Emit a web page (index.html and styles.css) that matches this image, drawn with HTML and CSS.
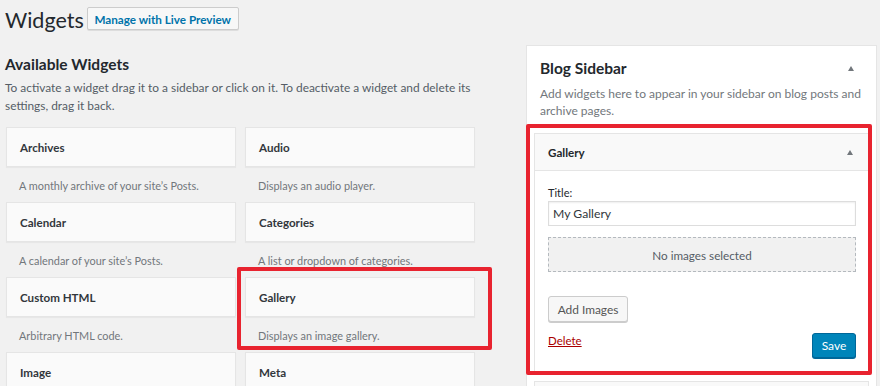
FILE: index.html
```html
<!DOCTYPE html>
<html>
<head>
<meta charset="utf-8">
<link rel="stylesheet" href="styles.css">
</head>
<body>
<div class="wrap">
  <div class="top">
    <h1 class="title">Widgets</h1>
    <button class="live-btn">Manage with Live Preview</button>
  </div>
  <div class="columns">
    <div class="left">
      <h2 class="avail-h">Available Widgets</h2>
      <p class="avail-p">To activate a widget drag it to a sidebar or click on it. To deactivate a widget and delete its settings, drag it back.</p>
      <div class="grid">
        <div class="item"><div class="card">Archives</div><div class="desc">A monthly archive of your site’s Posts.</div></div>
        <div class="item"><div class="card">Audio</div><div class="desc">Displays an audio player.</div></div>
        <div class="item"><div class="card">Calendar</div><div class="desc">A calendar of your site’s Posts.</div></div>
        <div class="item"><div class="card">Categories</div><div class="desc">A list or dropdown of categories.</div></div>
        <div class="item"><div class="card">Custom HTML</div><div class="desc">Arbitrary HTML code.</div></div>
        <div class="item highlight"><div class="card">Gallery</div><div class="desc">Displays an image gallery.</div><div class="redbox red-left"></div></div>
        <div class="item"><div class="card">Image</div><div class="desc"></div></div>
        <div class="item"><div class="card">Meta</div><div class="desc"></div></div>
      </div>
    </div>
    <div class="right">
      <div class="panel">
        <div class="panel-head">
          <h2 class="panel-title">Blog Sidebar</h2>
          <span class="tri"></span>
        </div>
        <p class="panel-desc">Add widgets here to appear in your sidebar on blog posts and archive pages.</p>
        <div class="widget highlight">
          <div class="w-head"><span class="w-title">Gallery</span><span class="tri"></span></div>
          <div class="w-body">
            <label class="w-label">Title:</label>
            <div class="w-input">My Gallery</div>
            <div class="w-empty">No images selected</div>
            <button class="btn">Add Images</button>
            <div class="w-actions">
              <a class="delete">Delete</a>
              <button class="save">Save</button>
            </div>
          </div>
          <div class="redbox red-right"></div>
        </div>
        <div class="widget next"><div class="w-head"></div></div>
      </div>
    </div>
  </div>
</div>
</body>
</html>
```

FILE: styles.css
```css
* { box-sizing: border-box; }
html, body { margin: 0; padding: 0; }
body {
  background: #f1f1f1;
  font-family: "Lato", "Open Sans", sans-serif;
  font-size: 12px;
  color: #23282d;
  width: 880px;
  height: 386px;
  overflow: hidden;
}
.wrap { padding-left: 5px; }
.top {
  height: 40px;
  padding-top: 7px;
  display: flex;
  align-items: flex-start;
  gap: 10px;
}
.title {
  margin: 1px 0 0;
  font-size: 21.5px;
  font-weight: 400;
  line-height: 24px;
  color: #23282d;
}
.live-btn {
  height: 23px;
  width: 152px;
  margin-left: -7px;
  padding: 0;
  border: 1px solid #ccc;
  border-radius: 2px;
  background: #f7f7f7;
  color: #0073aa;
  font-family: inherit;
  font-size: 11.7px;
  font-weight: 700;
  box-shadow: 0 1px 0 #ddd;
}
.columns { display: flex; gap: 50px; }
.left { width: 471px; }
.avail-h {
  margin: 15px 0 0;
  font-size: 15.5px;
  line-height: 18px;
  font-weight: 700;
}
.avail-p {
  margin: 6px 0 0;
  font-size: 11.9px;
  line-height: 18px;
  color: #555d66;
}
.grid {
  margin: 12px 0 0 1px;
  display: grid;
  grid-template-columns: 230px 230px;
  column-gap: 9px;
}
.item { position: relative; height: 75px; }
.card {
  height: 40px;
  background: #fafafa;
  border: 1px solid #e5e5e5;
  box-shadow: 0 1px 1px rgba(0,0,0,.04);
  padding: 0 13px;
  display: flex;
  align-items: center;
  font-size: 11.6px;
  font-weight: 700;
  color: #32373c;
}
.desc {
  padding: 10px 13px 0;
  line-height: 17px;
  color: #72777c;
  font-size: 10.9px;
}
.redbox {
  position: absolute;
  border: 4px solid #e8232f;
  border-radius: 2px;
  pointer-events: none;
}
.red-left { left: -8px; top: -10px; right: -17px; bottom: 2px; }
.right { width: 351px; padding-top: 5px; }
.panel {
  background: #fff;
  border: 1px solid #e5e5e5;
  height: 400px;
  padding: 0 7px;
}
.panel-head {
  display: flex;
  align-items: center;
  justify-content: space-between;
  padding: 11px 15px 0 6px;
}
.panel-title {
  margin: 0;
  font-size: 15.5px;
  font-weight: 700;
  line-height: 22px;
}
.tri {
  width: 0; height: 0;
  border-left: 3.5px solid transparent;
  border-right: 3.5px solid transparent;
  border-bottom: 5px solid #72777c;
}
.panel-desc {
  margin: 6px 0 0 6px;
  font-size: 12px;
  line-height: 17px;
  color: #72777c;
}
.widget {
  position: relative;
  margin-top: 14px;
  border: 1px solid #e5e5e5;
  background: #fff;
}
.w-head {
  height: 37px;
  background: #f9f9f9;
  border-bottom: 1px solid #e5e5e5;
  display: flex;
  align-items: center;
  justify-content: space-between;
  padding: 0 15px 0 13px;
}
.w-title { font-size: 11.6px; font-weight: 700; }
.w-body { padding: 14px 12px 13px 13px; }
.w-label { display: block; line-height: 16px; font-size: 11px; }
.w-input {
  height: 25px;
  border: 1px solid #ddd;
  box-shadow: inset 0 1px 2px rgba(0,0,0,.07);
  padding: 0 4px;
  display: flex;
  align-items: center;
  font-size: 12.2px;
  color: #32373c;
}
.w-empty {
  margin-top: 11px;
  height: 35px;
  border: 1px dashed #b4b9be;
  background: #f1f1f1;
  display: flex;
  align-items: center;
  justify-content: center;
  color: #555d66;
  font-size: 11.7px;
}
.btn {
  display: block;
  margin-top: 24px;
  height: 26px;
  width: 80px;
  padding: 0;
  border: 1px solid #ccc;
  border-radius: 3px;
  background: #f7f7f7;
  box-shadow: 0 1px 0 #ccc;
  color: #555;
  font-family: inherit;
  font-size: 11.9px;
}
.w-actions {
  margin-top: 11px;
  display: flex;
  justify-content: space-between;
  align-items: flex-start;
}
.delete {
  color: #a00;
  text-decoration: underline;
  font-size: 11.5px;
  line-height: 16px;
}
.save {
  height: 25px;
  width: 44px;
  padding: 0;
  border: 1px solid #006799;
  border-radius: 3px;
  background: #0085ba;
  box-shadow: 0 1px 0 #006799;
  color: #fff;
  font-family: inherit;
  font-size: 12px;
}
.red-right { left: -9px; top: -10px; right: -4px; bottom: -4px; }
.widget.next { margin-top: 9px; }
.widget.next .w-head { border-bottom: none; }
```
